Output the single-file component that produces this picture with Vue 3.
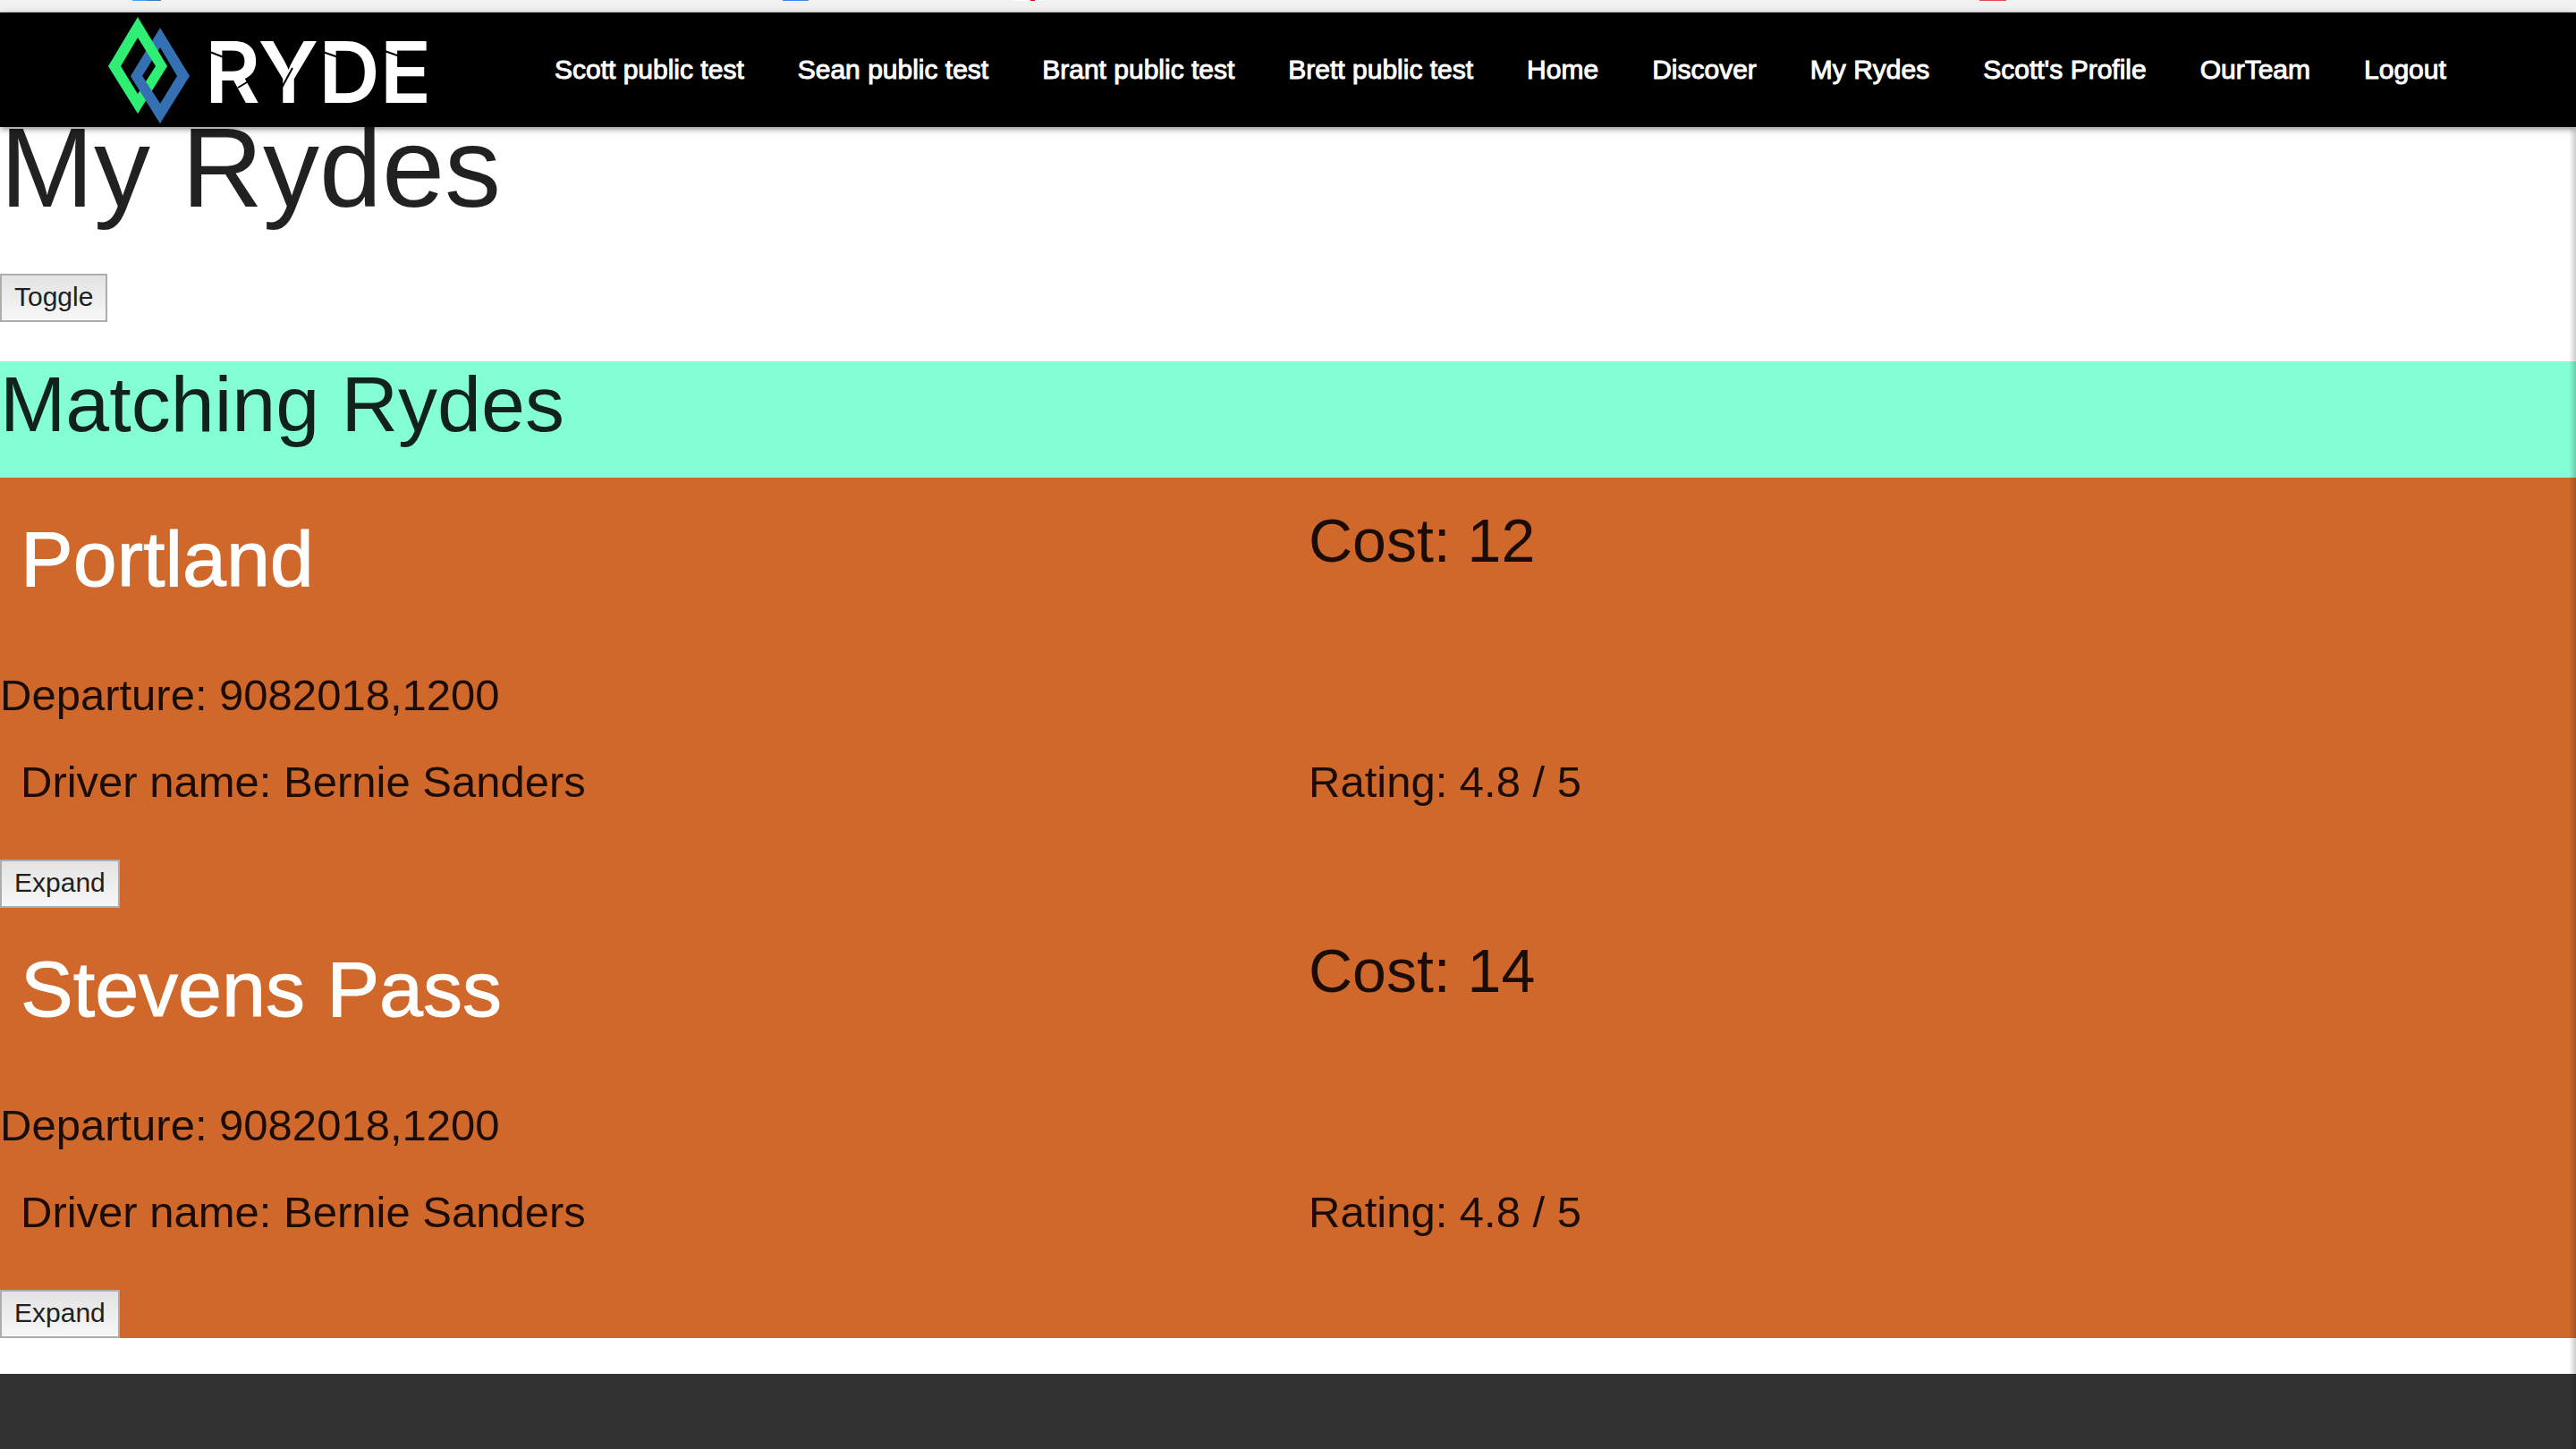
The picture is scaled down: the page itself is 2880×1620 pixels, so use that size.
<script setup>
const links = ['Scott public test', 'Sean public test', 'Brant public test', 'Brett public test', 'Home', 'Discover', 'My Rydes', "Scott's Profile", 'OurTeam', 'Logout']
const rydes = [
  { destination: 'Portland', cost: 12, departure: '9082018,1200', driver: 'Bernie Sanders', rating: 4.8 },
  { destination: 'Stevens Pass', cost: 14, departure: '9082018,1200', driver: 'Bernie Sanders', rating: 4.8 },
]
</script>

<template>
  <div class="page">
    <header class="top">
      <svg class="strip" aria-hidden="true">
        <rect x="148" width="16" height="1" fill="#42a5f5" />
        <rect x="164" width="16" height="1" fill="#3b7bbf" />
        <rect x="875" width="29" height="1" fill="#4285f4" />
        <rect x="1134" width="32" height="1" fill="#fff" />
        <rect x="1152" width="5" height="1" fill="#e3000f" />
        <rect x="2213" width="30" height="1" fill="#dd5548" />
      </svg>
      <nav class="nav">
        <a class="brand" href="#" aria-label="RYDE">
          <svg class="logo" viewBox="115 14 370 128">
            <path fill="#3470b2" fill-rule="evenodd" d="M179 31L212 85L179 138L146 85ZM179 53L159 85L179 116L198 85Z" />
            <path fill="#2eee74" fill-rule="evenodd" d="M154 19L187 74L154 127L121 74ZM154 42L135 74L154 105L174 74Z" />
            <path fill="#3470b2" d="M146 85L159 85L179 116L179 138Z" />
            <text x="229" y="115">RYDE</text>
            <!-- stencil cuts across the wordmark -->
            <g stroke="#000" stroke-width="2">
              <path d="M232 57L250 64" />
              <path d="M266 98L286 86" />
              <path d="M327 76L315 98" />
              <path d="M358 57L378 64" />
              <path d="M430 57L450 64" />
            </g>
          </svg>
        </a>
        <ul class="links">
          <li v-for="link in links" :key="link"><a href="#">{{ link }}</a></li>
        </ul>
      </nav>
    </header>

    <main class="main">
      <h1>My Rydes</h1>
      <button type="button">Toggle</button>
      <section class="matches">
        <h3 class="heading">Matching Rydes</h3>
        <article v-for="ryde in rydes" :key="ryde.destination" class="ryde">
          <div class="row">
            <h3 class="destination">{{ ryde.destination }}</h3>
            <h4>Cost: {{ ryde.cost }}</h4>
          </div>
          <h5>Departure: {{ ryde.departure }}</h5>
          <div class="row driver">
            <h5>Driver name: {{ ryde.driver }}</h5>
            <h5>Rating: {{ ryde.rating }} / 5</h5>
          </div>
          <button type="button">Expand</button>
        </article>
      </section>
    </main>
    <footer class="footer"></footer>
  </div>
</template>

<style>
body {
  margin: 0;
  background: #fff;
}
</style>

<style scoped>
.page {
  position: relative;
  display: flex;
  flex-direction: column;
  min-height: 100vh;
  overflow-x: hidden;
  font-family: "Liberation Sans", Arial, sans-serif;
  color: rgba(0, 0, 0, 0.87);
}
.top {
  position: relative;
  z-index: 1;
}
.strip {
  display: block;
  box-sizing: border-box;
  width: 100%;
  height: 14px;
  background: #f1f1f1;
  border-bottom: 1px solid #c8c8c8;
}
.nav {
  display: flex;
  justify-content: space-between;
  height: 128px;
  padding: 0 4%;
  background: #000;
  box-shadow: 0 4px 4px rgba(0, 0, 0, 0.14), 0 6px 2px -4px rgba(0, 0, 0, 0.12), 0 2px 10px rgba(0, 0, 0, 0.2);
}
.logo {
  display: block;
  width: 370px;
  height: 128px;
}
.logo text {
  font-family: Inter, sans-serif;
  font-size: 95px;
  font-weight: 600;
  fill: #fff;
}
.links {
  display: flex;
  margin: 0;
  padding: 0;
  list-style: none;
}
.links a {
  display: block;
  padding: 0 30px;
  font-size: 30px;
  line-height: 128px;
  color: #fff;
  -webkit-text-stroke: 1px #fff;
  text-decoration: none;
  white-space: nowrap;
}
.main {
  margin-top: -23px;
}
h1, h3, h4, h5 {
  margin: 0;
  font-weight: 400;
}
h1 {
  margin-bottom: 49px;
  font-size: 126px;
  line-height: 138px;
}
h3 {
  font-size: 88px;
  line-height: 96px;
}
h4 {
  font-size: 68px;
  line-height: 74px;
}
h5 {
  font-size: 49px;
  line-height: 54px;
}
button {
  display: block;
  height: 54px;
  padding: 0 14px 2px;
  border: 2px solid #adadad;
  border-radius: 0;
  background: linear-gradient(#e3e3e3, #f7f7f7);
  font-family: inherit;
  font-size: 30px;
  line-height: 48px;
  color: #212121;
}
.matches {
  margin: 44px 0 40px;
  background: #d0682b;
}
.heading {
  padding-bottom: 34px;
  background: #84ffd5;
}
.row {
  display: grid;
  grid-template-columns: 1fr 1fr;
}
.row > * {
  padding: 0 23px;
}
.ryde {
  padding-top: 33px;
}
.row > .destination {
  padding-top: 10px;
  margin-bottom: 77px;
  color: #fff;
  -webkit-text-stroke: 1px #fff;
}
.driver {
  margin: 43px 0 60px;
}
.footer {
  flex: 1;
  min-height: 84px;
  background: #323232;
}
.page::after {
  content: "";
  position: absolute;
  top: 142px;
  right: 0;
  bottom: 0;
  width: 8px;
  background: linear-gradient(to right, transparent, rgba(0, 0, 0, 0.2));
}
</style>
